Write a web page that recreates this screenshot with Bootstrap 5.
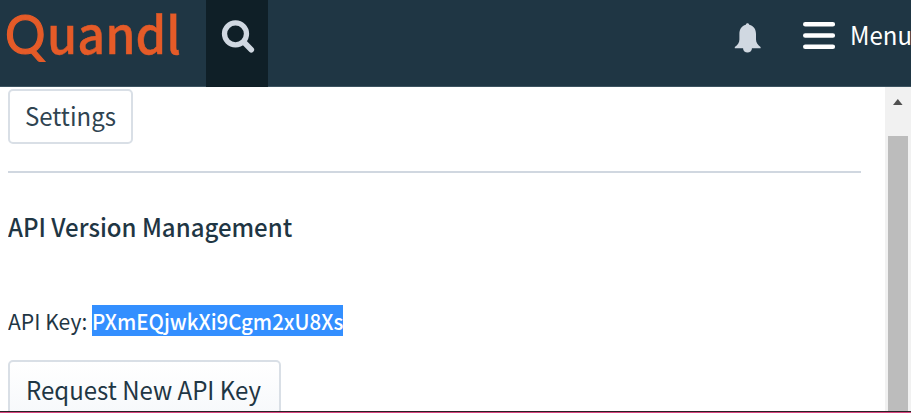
<!DOCTYPE html>
<html lang="en">
<head>
<meta charset="utf-8">
<meta name="viewport" content="width=device-width, initial-scale=1">
<title>Quandl</title>
<link href="https://cdn.jsdelivr.net/npm/bootstrap@5.3.0/dist/css/bootstrap.min.css" rel="stylesheet">
<style>
body{height:413px;font-family:"Noto Sans CJK SC","Noto Sans",sans-serif;color:#1f3644;background:#fff;line-height:1}
.page{height:413px;border-bottom:1px solid #d8467f}
.view{border-bottom:1px solid #2b2026}
.topbar{height:87px;padding-top:1px;background:#1f3644;border-bottom:1px solid #3c5360}
.brand{width:206px;height:85px;padding:1px 0 0 5px;color:#e55b28;font-size:51px;line-height:60px;font-weight:500}
.brand-q{font-family:Lato,sans-serif;font-weight:400;font-size:55px;line-height:56px;-webkit-text-stroke:1.2px #e55b28;display:inline-block;width:42px;transform:scaleX(.92);transform-origin:0 50%}
.brand-rest{display:inline-block;transform:scaleX(.955);transform-origin:0 50%;-webkit-text-stroke:.4px #e55b28}
.search{width:62px;height:87px;background:#0f1f27;margin-top:-1px}
.bell{margin-left:465px}
.burger{margin-left:41px}
.menu{font-size:25px;line-height:30px;color:#fff;margin:18px 0 0 14px;width:61px}
.narrow{display:inline-block;transform:scaleX(.96);transform-origin:0 50%}
.sheet{padding:2px 0 0 8px}
.tool{height:55px;border:2px solid #d9dfe6;border-radius:5px;color:#2f4451;font-size:25px;line-height:46px;padding:0 0 3px 15px;background:#fff;text-align:left}
.settings{width:125px}
.request{width:273px;height:60px;margin-top:24px;padding-left:16px;color:#1f3644;background:linear-gradient(#fff,#f6f8fb)}
.rule{height:2px;width:853px;background:#d0d7e0;margin-top:27px}
.title{font-size:25px;line-height:32px;font-weight:500;margin:37px 0 0}
.keyrow{font-size:22px;line-height:30px;margin-top:63px}
.keylabel{width:84px}
.keyval{background:#338fff;color:#fff;height:31px;width:251px;font-weight:500}
.keyval .narrow{transform:scaleX(.93)}
.track{width:26px;background:#f1f1f1}
.thumb{width:20px;background:#bcbcbc;margin-top:31px}
</style>
<script src="https://cdn.jsdelivr.net/npm/bootstrap@5.3.0/dist/js/bootstrap.bundle.min.js"></script>
</head>
<body class="overflow-hidden">
<div class="page d-flex flex-column overflow-hidden">
<header class="topbar d-flex flex-shrink-0 align-items-start text-nowrap">
<a class="brand flex-shrink-0 text-decoration-none" href="#"><span class="brand-q">Q</span><span class="brand-rest">uandl</span></a>
<div class="search flex-shrink-0"><svg width="62" height="86" viewBox="0 0 62 86" fill="none" stroke="#d0d8e1"><circle cx="29.500" cy="33.8" r="11" stroke-width="5.3"/><path d="M38 42.3l7.3 7.500" stroke-width="5.600" stroke-linecap="round"/></svg></div>
<svg class="bell flex-shrink-0" width="28" height="60" viewBox="733 1 28 60" fill="#d0d8e1"><path d="M745.8 24.8c0-2.2 3.4-2.2 3.4 0 4.6 1 6.8 4.700 6.800 9.200v5.500c0 3 2 5.500 4.600 7.500v1.200h-25.800V47c2.800-2 4.600-4.500 4.600-7.500V34c0-4.500 2.200-8.200 6.400-9.200zM743 48h9c0 6-9 6-9 0z"/></svg>
<svg class="burger flex-shrink-0" width="34" height="60" viewBox="802 1 34 60" stroke="#fff" stroke-width="4.600" stroke-linecap="round"><path d="M805.300 24.300h27.500M805.300 35.500h27.500M805.300 46.700h27.500"/></svg>
<span class="menu flex-shrink-0"><span class="narrow">Menu</span></span>
</header>
<div class="view d-flex flex-grow-1 overflow-hidden">
<main class="sheet flex-grow-1 text-nowrap">
<button class="tool settings d-block"><span class="narrow">Settings</span></button>
<div class="rule"></div>
<h1 class="title"><span class="narrow">API Version Management</span></h1>
<div class="keyrow d-flex"><span class="keylabel"><span class="narrow">API Key:</span></span><span class="keyval"><span class="narrow">PXmEQjwkXi9Cgm2xU8Xs</span></span></div>
<button class="tool request d-block"><span class="narrow">Request New API Key</span></button>
</main>
<div class="track d-flex flex-column align-items-center flex-shrink-0">
<svg class="flex-shrink-0" width="26" height="18" viewBox="0 0 26 18"><path d="M8 18l4.800-6 4.800 6z" fill="#505050"/></svg>
<div class="thumb flex-grow-1"></div>
</div>
</div>
</div>
</body>
</html>
